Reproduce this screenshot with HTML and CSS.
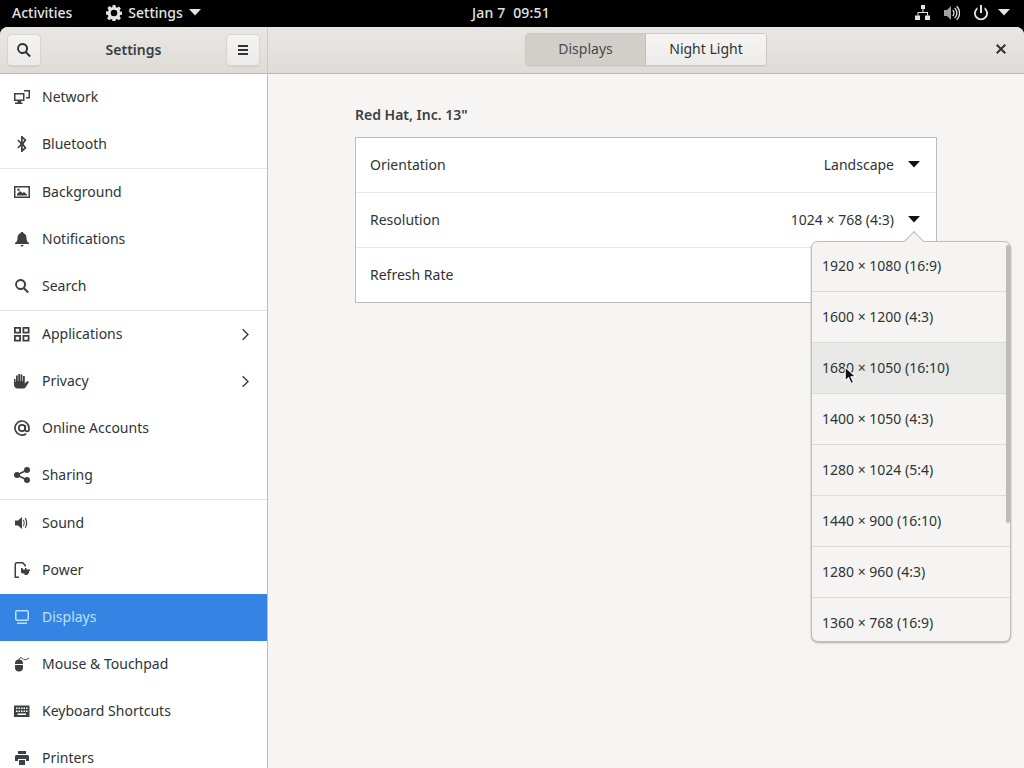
FILE: index.html
```html
<!DOCTYPE html>
<html lang="en">
<head>
<meta charset="utf-8">
<title>Settings</title>
<link rel="stylesheet" href="styles.css">
</head>
<body>
<div class="screen">
  <div class="topbar">
    <div class="top-left">
      <span class="activities">Activities</span>
      <span class="appmenu">
        <svg class="gear" viewBox="0 0 16 16"><path fill-rule="evenodd" d="M6.600 0h2.800l.4 2.200 1.200.5 1.900-1.300 2 2-1.300 1.900.5 1.200 2.200.4v2.800l-2.200.4-.5 1.200 1.300 1.900-2 2-1.900-1.300-1.200.5-.4 2.200H6.600l-.4-2.200-1.200-.5-1.900 1.300-2-2 1.300-1.900-.5-1.200L0 9.400V6.600l2.200-.4.5-1.200-1.300-1.900 2-2 1.900 1.300 1.200-.5zM8 4.700a3.300 3.300 0 1 0 0 6.600 3.300 3.300 0 0 0 0-6.600z"/></svg>
        <span>Settings</span>
        <svg class="caret-top" viewBox="0 0 12 7"><path d="M0 0h12L6 6.500z"/></svg>
      </span>
    </div>
    <div class="clock">Jan 7&nbsp;&nbsp;09:51</div>
    <div class="tray">
      <svg class="tray-ic" viewBox="0 0 16 16"><path d="M6 0h4v4H6zM0 10.500h5V15H0zM10 10.500h5V15h-5z"/><path d="M7.500 4h1v3H13v3.500h-1V8H3.500v2.500h-1V7h5z"/></svg>
      <svg class="tray-ic" viewBox="0 0 16 16"><path d="M0 5h3l4-4v14l-4-4H0z" opacity=".7"/><path d="M9 4.500c2 1.500 2 5.500 0 7l-.7-1c1.300-1.200 1.300-3.800 0-5zM11 2.500c3.300 2.800 3.300 8.200 0 11l-.8-1c2.600-2.300 2.600-6.700 0-9zM13 .8c4.300 3.800 4.300 10.600 0 14.400l-.8-.9c3.600-3.400 3.600-9.200 0-12.600z"/></svg>
      <span class="power-group">
        <svg class="tray-ic" viewBox="0 0 16 16"><path d="M7 0h2v8H7z"/><path d="M4.500 2.200v2.200a5.200 5.200 0 1 0 7 0V2.200a7 7 0 1 1-7 0z"/></svg>
        <svg class="caret-top" viewBox="0 0 12 7"><path d="M0 0h12L6 6.500z"/></svg>
      </span>
    </div>
  </div>

  <div class="window">
    <header class="headerbar">
      <div class="head-left">
        <button class="hbtn">
          <svg class="ic-dark" viewBox="0 0 16 16"><path d="M6.500 1a5.500 5.500 0 0 1 4.400 8.800l4 4-1.400 1.400-4-4A5.500 5.500 0 1 1 6.500 1zm0 2a3.500 3.500 0 1 0 0 7 3.500 3.500 0 0 0 0-7z"/></svg>
        </button>
        <span class="head-title">Settings</span>
        <button class="hbtn">
          <svg class="ic-dark" viewBox="0 0 16 16"><path d="M3 3h10v2H3zM3 7h10v2H3zM3 11h10v2H3z"/></svg>
        </button>
      </div>
      <div class="head-right">
        <div class="switcher">
          <span class="sw sw-on">Displays</span>
          <span class="sw">Night Light</span>
        </div>
        <svg class="close" viewBox="0 0 16 16"><path d="M4.400 3L8 6.600 11.600 3 13 4.400 9.400 8l3.600 3.600-1.400 1.400L8 9.400 4.400 13 3 11.600 6.600 8 3 4.400z"/></svg>
      </div>
    </header>

    <div class="body">
      <nav class="sidebar">
        <div class="row">
          <svg class="ic" viewBox="0 0 16 16"><path fill-rule="evenodd" d="M0 4h10.500v8H7v1.500h1.500V15H1v-1.500h2.500V12H0zm1.500 1.500v5h7.500v-5zM10 1h6v8.500h-4V8h2.500V2.500H10z"/></svg>
          <span>Network</span>
        </div>
        <div class="row">
          <svg class="ic" viewBox="0 0 16 16"><path fill-rule="evenodd" d="M7 0h1.200L12.500 4 9.600 8l2.900 4-4.300 4H7V10l-2.700 2.500-1-1L6.500 8 3.300 4.500l1-1L7 6zm1.700 3v3.200L10.300 4zm0 6.800V13l1.600-1.200z"/></svg>
          <span>Bluetooth</span>
        </div>
        <div class="sep"></div>
        <div class="row">
          <svg class="ic" viewBox="0 0 16 16"><path fill-rule="evenodd" d="M0 2h16v12H0zm1.500 1.500v9h13v-9zM3 10l3-3 2.500 2 1.500-1 3 2.500V11.500H3zM4.500 4.500a1.200 1.200 0 1 1 0 2.400 1.200 1.200 0 0 1 0-2.400z"/></svg>
          <span>Background</span>
        </div>
        <div class="row">
          <svg class="ic" viewBox="0 0 16 16"><path d="M8 1c1 0 1.500.6 1.600 1.300C11.500 3 12.500 4.500 12.500 7c0 3 1 4 2.500 5v1H1v-1c1.500-1 2.500-2 2.500-5 0-2.500 1-4 2.900-4.700C6.500 1.600 7 1 8 1zM6.500 14h3a1.500 1.500 0 0 1-3 0z"/></svg>
          <span>Notifications</span>
        </div>
        <div class="row">
          <svg class="ic" viewBox="0 0 16 16"><path d="M6.500 1a5.500 5.500 0 0 1 4.400 8.800l4 4-1.400 1.400-4-4A5.500 5.500 0 1 1 6.500 1zm0 2a3.500 3.500 0 1 0 0 7 3.500 3.500 0 0 0 0-7z"/></svg>
          <span>Search</span>
        </div>
        <div class="sep"></div>
        <div class="row">
          <svg class="ic" viewBox="0 0 16 16"><path fill-rule="evenodd" d="M0 1h7v6.500H0zm1.800 1.800v2.900h3.400V2.800zM8.500 1h7v6.500h-7zm1.800 1.800v2.900h3.400V2.800zM0 9h7v6.500H0zm1.800 1.800v2.900h3.400v-2.900zM8.500 9h7v6.500h-7zm1.800 1.800v2.900h3.400v-2.900z"/></svg>
          <span>Applications</span>
          <svg class="chev" viewBox="0 0 10 16"><path d="M1.500 1.500L8 8l-6.500 6.500" fill="none" stroke="currentColor" stroke-width="1.800"/></svg>
        </div>
        <div class="row">
          <svg class="ic" viewBox="0 0 16 16"><path d="M0 6h1.500v3H2V2.500h1.800V8h.5V1h1.800v7h.5V1.500h1.800V8H9V3h1.800v7.500l2.500-2.500 1.700 1-3.200 5c-.7 1-1.500 1.500-3 1.500H4c-2.500 0-4-1.500-4-4z"/></svg>
          <span>Privacy</span>
          <svg class="chev" viewBox="0 0 10 16"><path d="M1.500 1.500L8 8l-6.500 6.500" fill="none" stroke="currentColor" stroke-width="1.800"/></svg>
        </div>
        <div class="row">
          <svg class="ic" viewBox="0 0 16 16"><circle cx="8" cy="8" r="3.200" fill="none" stroke="currentColor" stroke-width="1.700"/><path d="M11.200 5v4.500a1.900 1.900 0 0 0 3.800 0V8a7 7 0 1 0-2.900 5.700" fill="none" stroke="currentColor" stroke-width="1.700"/></svg>
          <span>Online Accounts</span>
        </div>
        <div class="row">
          <svg class="ic" viewBox="0 0 16 16"><circle cx="3" cy="8" r="3"/><circle cx="13" cy="3" r="3"/><circle cx="13" cy="13" r="3"/><path d="M3 8l10-5M3 8l10 5" stroke="currentColor" stroke-width="1.600" fill="none"/></svg>
          <span>Sharing</span>
        </div>
        <div class="sep"></div>
        <div class="row">
          <svg class="ic" viewBox="0 0 16 16"><path d="M1 5.500h3L8 2v12l-4-3.500H1z"/><path d="M9.500 4.500c1.500 1.500 1.500 5.500 0 7l-.6-.8c1-1.300 1-4.100 0-5.400zM11.500 2.800c2.300 2.500 2.300 7.900 0 10.400l-.8-.7c1.800-2.300 1.800-6.700 0-9z"/></svg>
          <span>Sound</span>
        </div>
        <div class="row">
          <svg class="ic" viewBox="0 0 16 16"><path d="M3 0h6l3 3v1.500h-1.500V3.700L8.300 1.500H3a1 1 0 0 0-1 1V14.500h3V16H.5V2.500A2.500 2.500 0 0 1 3 0z"/><path d="M7 6h1.500l.5 1.500h2V6h1.500v1.500H16V9h-1v2l-2 2h-2.500v-1.500H8.500L7 10.500z"/></svg>
          <span>Power</span>
        </div>
        <div class="row row-active">
          <svg class="ic" viewBox="0 0 16 16"><path fill-rule="evenodd" d="M3 1h10a2 2 0 0 1 2 2v7a2 2 0 0 1-2 2H3a2 2 0 0 1-2-2V3a2 2 0 0 1 2-2zm0 1.500a.5.500 0 0 0-.5.500v7c0 .3.200.5.500.5h10c.3 0 .5-.2.500-.5V3a.5.500 0 0 0-.5-.5zM3 13.500h10V15H3z"/></svg>
          <span>Displays</span>
        </div>
        <div class="row">
          <svg class="ic" viewBox="0 0 16 16"><path d="M5 3.500a4 4 0 0 1 4 4V8H1v-.5a4 4 0 0 1 4-4zM1 9h8v2.500a4 4 0 0 1-8 0z"/><path d="M5 4C5 1.500 7 1 8.500 2.500S11.500 4.500 15 2" fill="none" stroke="currentColor"/></svg>
          <span>Mouse &amp; Touchpad</span>
        </div>
        <div class="row">
          <svg class="ic" viewBox="0 0 16 16"><path fill-rule="evenodd" d="M0 2.500h15.500v11.500H0zM2 4.500V6h1.500V4.500zm2.500 0V6H6V4.500zm2.500 0V6h1.500V4.500zm2.500 0V6H11V4.500zm2.500 0V6h1.500V4.500zM2 7.500V9h1.500V7.500zm2.500 0V9H6V7.500zm2.500 0V9h1.500V7.500zm2.500 0V9H11V7.500zm2.500 0V9h1.500V7.500zM3.500 10.500V12h8.500v-1.500z"/></svg>
          <span>Keyboard Shortcuts</span>
        </div>
        <div class="row">
          <svg class="ic" viewBox="0 0 16 16"><path fill-rule="evenodd" d="M4 1h8v3H4zM2.500 5h11A1.500 1.500 0 0 1 15 6.500V11h-3V9H4v2H1V6.500A1.500 1.500 0 0 1 2.500 5zM5 10h6v5H5z"/></svg>
          <span>Printers</span>
        </div>
      </nav>

      <main class="content">
        <div class="panel">
          <h2 class="panel-title">Red Hat, Inc. 13"</h2>
          <div class="frame">
            <div class="frow">
              <span class="flabel">Orientation</span>
              <span class="fvalue">Landscape</span>
              <svg class="caret" viewBox="0 0 12 7"><path d="M0 0h12L6 6.500z"/></svg>
            </div>
            <div class="frow">
              <span class="flabel">Resolution</span>
              <span class="fvalue">1024 × 768 (4:3)</span>
              <svg class="caret" viewBox="0 0 12 7"><path d="M0 0h12L6 6.500z"/></svg>
            </div>
            <div class="frow">
              <span class="flabel">Refresh Rate</span>
            </div>
          </div>
        </div>
      </main>
    </div>
  </div>

  <div class="popover">
    <span class="pop-arrow"></span>
    <div class="pop-list">
      <div class="pop-row">1920 × 1080 (16:9)</div>
      <div class="pop-row">1600 × 1200 (4:3)</div>
      <div class="pop-row pop-hover">1680 × 1050 (16:10)</div>
      <div class="pop-row">1400 × 1050 (4:3)</div>
      <div class="pop-row">1280 × 1024 (5:4)</div>
      <div class="pop-row">1440 × 900 (16:10)</div>
      <div class="pop-row">1280 × 960 (4:3)</div>
      <div class="pop-row">1360 × 768 (16:9)</div>
    </div>
    <span class="pop-scroll"></span>
  </div>

  <svg class="cursor" viewBox="0 0 12 18"><path d="M1 1v13l3.200-3 2.300 5.500 2.300-1-2.300-5.300H11z" fill="#111" stroke="#fff" stroke-width="1"/></svg>
</div>
</body>
</html>
```
FILE: styles.css
```css
* { box-sizing: border-box; }
html, body { margin: 0; padding: 0; height: 100%; overflow: hidden; background: #000; }
body { font-family: "Noto Sans", sans-serif; font-size: 14px; line-height: 18px; color: #2e3436; }
.screen { position: relative; width: 1024px; height: 768px; display: flex; flex-direction: column; overflow: hidden; background: #000; }

.topbar { height: 27px; flex: none; display: grid; grid-template-columns: 1fr auto 1fr; align-items: center; padding: 0 14px 2px 12px; color: #e4e4e2; font-weight: 500; }
.top-left { display: flex; align-items: center; gap: 34px; }
.appmenu { display: flex; align-items: center; gap: 6px; }
.gear { width: 16px; height: 16px; fill: #e4e4e2; }
.caret-top { width: 12px; height: 7px; fill: #e4e4e2; }
.clock { letter-spacing: .2px; }
.tray { display: flex; align-items: center; justify-content: flex-end; gap: 13px; }
.tray-ic { width: 16px; height: 16px; fill: #e4e4e2; }
.power-group { display: flex; align-items: center; gap: 9px; }

.window { flex: 1; min-height: 0; display: flex; flex-direction: column; background: #f6f5f4; border-radius: 8px 8px 0 0; overflow: hidden; }
.headerbar { height: 47px; flex: none; display: flex; background: linear-gradient(#e9e7e4, #dfdcd8); border-bottom: 1px solid #bfb8b1; }
.head-left { width: 268px; flex: none; display: flex; align-items: center; justify-content: space-between; padding: 0 7px 1px; border-right: 1px solid #cfcac5; }
.head-title { font-weight: 600; color: #3d3d3d; }
.hbtn { width: 34px; height: 32px; padding: 0; display: flex; align-items: center; justify-content: center; background: linear-gradient(#f4f3f1, #edebe9); border: 1px solid #d8d4d0; border-radius: 4px; box-shadow: 0 1px 1px rgba(0,0,0,.08); }
.ic-dark { width: 16px; height: 16px; fill: #2e3436; }
.head-right { flex: 1; position: relative; display: flex; align-items: center; justify-content: center; padding-bottom: 1px; }
.switcher { display: flex; height: 33px; border: 1px solid #cdc7c2; border-radius: 4px; overflow: hidden; box-shadow: 0 1px 1px rgba(0,0,0,.06); }
.sw { width: 120px; display: flex; align-items: center; justify-content: center; padding-bottom: 1px; background: linear-gradient(#f6f5f4, #edebe9); color: #2e3436; }
.sw-on { background: #d2cfca; color: #474b4c; border-right: 1px solid #c4bfb9; }
.close { width: 16px; height: 16px; fill: #2e3436; position: absolute; right: 15px; top: 14px; }

.body { flex: 1; min-height: 0; display: flex; }
.sidebar { width: 268px; flex: none; background: #fff; border-right: 1px solid #c0bcb7; overflow: hidden; }
.row { height: 47px; display: flex; align-items: center; gap: 12px; padding: 0 15px 1px 14px; color: #2e3436; }
.row > span { flex: 1; }
.row .ic { width: 16px; height: 16px; flex: none; fill: #3c4042; color: #3c4042; }
.chev { width: 9px; height: 13px; color: #3c4042; margin-right: 2px; }
.sep { height: 1px; background: #e6e5e3; }
.row-active { background: #3584e4; color: #b9e2fb; }
.row-active .ic { fill: #b9e2fb; }

.content { flex: 1; min-width: 0; display: flex; justify-content: center; background: #f6f5f4; }
.panel { width: 582px; padding-top: 32px; }
.panel-title { margin: 0; height: 31px; font-size: 14px; font-weight: 600; color: #3d4042; line-height: 18px; }
.frame { height: 166px; background: #fff; border: 1px solid #bfbbb6; display: flex; flex-direction: column; }
.frow { height: 55px; flex: none; display: flex; align-items: center; padding: 0 16px 1px 14px; border-bottom: 1px solid #e6e5e3; }
.frow:last-child { border-bottom: 0; }
.flabel { flex: 1; }
.fvalue { margin-right: 14px; }
.caret { width: 12px; height: 7px; fill: #111; }

.popover { position: absolute; left: 811px; top: 241px; width: 200px; height: 401px; background: #f5f4f3; border: 1px solid #c2bdb8; border-radius: 7px; box-shadow: 0 1px 2px rgba(0,0,0,.3); }
.pop-arrow { position: absolute; left: 95px; top: -8px; width: 14px; height: 14px; background: #f5f4f3; border-left: 1px solid #c2bdb8; border-top: 1px solid #c2bdb8; transform: rotate(45deg); }
.pop-list { position: relative; height: 399px; overflow: hidden; border-radius: 6px; }
.pop-row { height: 51px; display: flex; align-items: center; padding: 0 10px 1px; border-bottom: 1px solid #dddbd9; color: #2e3436; }
.pop-row:first-child { height: 50px; }
.pop-hover { background: #e8e8e7; }
.pop-scroll { position: absolute; right: 0; top: 3px; width: 4px; height: 278px; border-radius: 2px; background: #bdbcba; }
.cursor { position: absolute; left: 844px; top: 366px; width: 13px; height: 19px; }
```
